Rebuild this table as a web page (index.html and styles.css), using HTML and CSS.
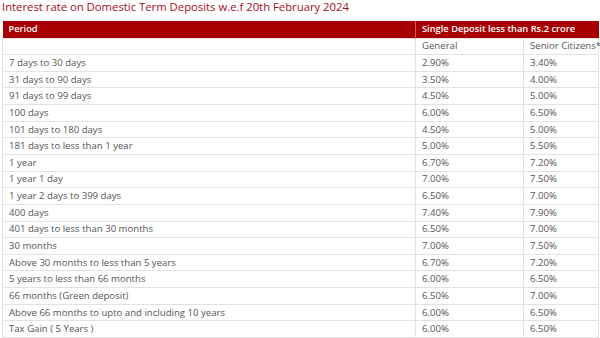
FILE: index.html
```html
<!DOCTYPE html>
<html>
<head>
<meta charset="utf-8">
<link rel="stylesheet" href="styles.css">
</head>
<body>
<h3 class="title">Interest rate on Domestic Term Deposits w.e.f 20th February 2024</h3>
<table class="rates">
  <colgroup>
    <col class="c1"><col class="c2"><col class="c3">
  </colgroup>
  <thead>
    <tr class="head"><th>Period</th><th colspan="2">Single Deposit less than Rs.2 crore</th></tr>
  </thead>
  <tbody>
    <tr><td></td><td>General</td><td>Senior Citizens*</td></tr>
    <tr><td>7 days to 30 days</td><td>2.90%</td><td>3.40%</td></tr>
    <tr><td>31 days to 90 days</td><td>3.50%</td><td>4.00%</td></tr>
    <tr><td>91 days to 99 days</td><td>4.50%</td><td>5.00%</td></tr>
    <tr><td>100 days</td><td>6.00%</td><td>6.50%</td></tr>
    <tr><td>101 days to 180 days</td><td>4.50%</td><td>5.00%</td></tr>
    <tr><td>181 days to less than 1 year</td><td>5.00%</td><td>5.50%</td></tr>
    <tr><td>1 year</td><td>6.70%</td><td>7.20%</td></tr>
    <tr><td>1 year 1 day</td><td>7.00%</td><td>7.50%</td></tr>
    <tr><td>1 year 2 days to 399 days</td><td>6.50%</td><td>7.00%</td></tr>
    <tr><td>400 days</td><td>7.40%</td><td>7.90%</td></tr>
    <tr><td>401 days to less than 30 months</td><td>6.50%</td><td>7.00%</td></tr>
    <tr><td>30 months</td><td>7.00%</td><td>7.50%</td></tr>
    <tr><td>Above 30 months to less than 5 years</td><td>6.70%</td><td>7.20%</td></tr>
    <tr><td>5 years to less than 66 months</td><td>6.00%</td><td>6.50%</td></tr>
    <tr><td>66 months (Green deposit)</td><td>6.50%</td><td>7.00%</td></tr>
    <tr><td>Above 66 months to upto and including 10 years</td><td>6.00%</td><td>6.50%</td></tr>
    <tr><td>Tax Gain ( 5 Years )</td><td>6.00%</td><td>6.50%</td></tr>
  </tbody>
</table>
</body>
</html>
```
FILE: styles.css
```css
html, body {
  margin: 0;
  padding: 0;
  background: #fff;
  overflow: hidden;
}
body {
  padding: 0 2px;
  font-family: "Open Sans", "Noto Sans", sans-serif;
}
.title {
  margin: 0;
  height: 21px;
  font-size: 11.3px;
  line-height: 13px;
  font-weight: 500;
  color: #a30d25;
}
.rates {
  width: 596px;
  border-collapse: collapse;
  table-layout: fixed;
  font-size: 9.6px;
  color: #555;
}
.c1 { width: 413px; }
.c2 { width: 108px; }
.c3 { width: 75px; }
.rates th, .rates td {
  height: 16.65px;
  padding: 0 6px;
  box-sizing: border-box;
  text-align: left;
  vertical-align: middle;
  white-space: nowrap;
  line-height: 12px;
}
.rates td {
  border: 1px solid #e2e2e2;
}
.head th {
  height: 17px;
  background: #a80000;
  color: #fff;
  font-size: 9.3px;
  font-weight: 600;
  border-left: 1px solid #c86060;
}
.head th:first-child { border-left: none; }
```
